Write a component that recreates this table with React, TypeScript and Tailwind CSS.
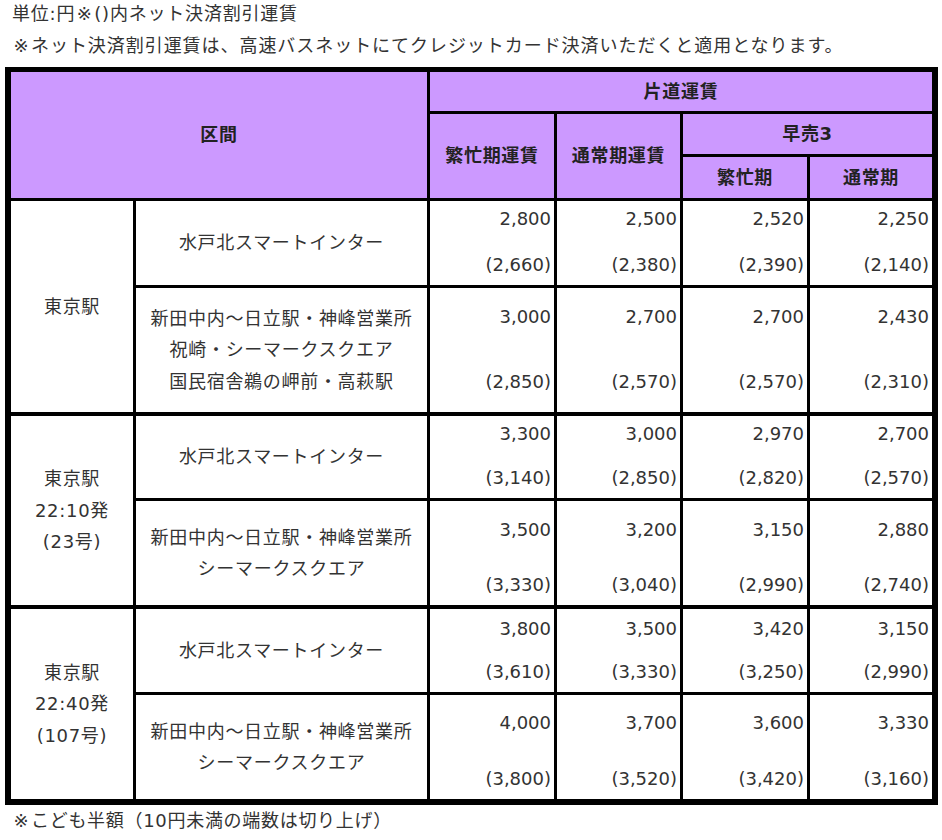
import React from 'react';

type FareRow = {
    route: string[];
    fares: [string, string][];
    pad: string;
};

type FareGroup = {
    label: string[];
    rows: FareRow[];
};

const GROUPS: FareGroup[] = [
    {
        label: ['東京駅'],
        rows: [
            {
                route: ['水戸北スマートインター'],
                fares: [['2,800', '(2,660)'], ['2,500', '(2,380)'], ['2,520', '(2,390)'], ['2,250', '(2,140)']],
                pad: 'pt-[2px] pb-[5px]',
            },
            {
                route: ['新田中内～日立駅・神峰営業所', '祝崎・シーマークスクエア', '国民宿舎鵜の岬前・高萩駅'],
                fares: [['3,000', '(2,850)'], ['2,700', '(2,570)'], ['2,700', '(2,570)'], ['2,430', '(2,310)']],
                pad: 'pt-[13px] pb-[15px]',
            },
        ],
    },
    {
        label: ['東京駅', '22:10発', '(23号)'],
        rows: [
            {
                route: ['水戸北スマートインター'],
                fares: [['3,300', '(3,140)'], ['3,000', '(2,850)'], ['2,970', '(2,820)'], ['2,700', '(2,570)']],
                pad: 'pt-[2px] pb-[5px]',
            },
            {
                route: ['新田中内～日立駅・神峰営業所', 'シーマークスクエア'],
                fares: [['3,500', '(3,330)'], ['3,200', '(3,040)'], ['3,150', '(2,990)'], ['2,880', '(2,740)']],
                pad: 'pt-[13px] pb-[5px]',
            },
        ],
    },
    {
        label: ['東京駅', '22:40発', '(107号)'],
        rows: [
            {
                route: ['水戸北スマートインター'],
                fares: [['3,800', '(3,610)'], ['3,500', '(3,330)'], ['3,420', '(3,250)'], ['3,150', '(2,990)']],
                pad: 'pt-[4px] pb-[5px]',
            },
            {
                route: ['新田中内～日立駅・神峰営業所', 'シーマークスクエア'],
                fares: [['4,000', '(3,800)'], ['3,700', '(3,520)'], ['3,600', '(3,420)'], ['3,330', '(3,160)']],
                pad: 'pt-[12px] pb-[5px]',
            },
        ],
    },
];

const HEAD = 'bg-[#cc99ff] flex items-center justify-center font-bold tracking-[0.7px] text-[#222]';

// ※ は全角幅で
function Mark() {
    return <span className="inline-block w-[19px] text-center">※</span>;
}

export default function App() {
    return (
        <div className="bg-white px-[5px] text-[18px] leading-[31.5px] text-[#333] font-['DejaVu_Sans','Noto_Sans_CJK_JP',sans-serif]">
            {/* 注記 */}
            <div className="-mt-[2px] mb-[6px] ml-[7px]">
                <p className="tracking-[0.8px]">単位:円<Mark />()内ネット決済割引運賃</p>
                <p className="tracking-[0.95px]"><Mark />ネット決済割引運賃は、高速バスネットにてクレジットカード決済いただくと適用となります。</p>
            </div>

            {/* 運賃表 */}
            <div className="w-[933px] bg-black pt-[5px] pl-[6px] pr-[6px] pb-[6px]">
                <div className="grid grid-cols-[122px_291px_124px_123px_124px_122px] grid-rows-[39px_40px_41px_84px_124px_83px_104px_84px_104px] gap-[3px]">
                    <div className={`${HEAD} col-span-2 row-span-3`}>区間</div>
                    <div className={`${HEAD} col-span-4`}>片道運賃</div>
                    <div className={`${HEAD} row-span-2`}>繁忙期運賃</div>
                    <div className={`${HEAD} row-span-2`}>通常期運賃</div>
                    <div className={`${HEAD} col-span-2`}>早売3</div>
                    <div className={HEAD}>繁忙期</div>
                    <div className={HEAD}>通常期</div>

                    {GROUPS.map((group, gi) => {
                        const top = gi > 0 ? 'border-t border-black' : '';
                        return group.rows.map((row, ri) => {
                            const edge = ri === 0 ? top : '';
                            return (
                                <React.Fragment key={`${gi}-${ri}`}>
                                    {ri === 0 && (
                                        <div className={`bg-white row-span-2 flex flex-col items-center justify-center tracking-[0.7px] ${top}`}>
                                            {group.label.map(l => <span key={l}>{l}</span>)}
                                        </div>
                                    )}
                                    <div className={`bg-white flex flex-col items-center justify-center tracking-[0.7px] ${edge}`}>
                                        {row.route.map(r => <span key={r}>{r}</span>)}
                                    </div>
                                    {row.fares.map(([fare, net], fi) => (
                                        <div key={fi} className={`bg-white flex flex-col items-end justify-between pr-[3px] ${row.pad} ${edge}`}>
                                            <span>{fare}</span>
                                            <span>{net}</span>
                                        </div>
                                    ))}
                                </React.Fragment>
                            );
                        });
                    })}
                </div>
            </div>

            <p className="ml-[7px] tracking-[0.7px]"><Mark />こども半額（10円未満の端数は切り上げ）</p>
        </div>
    );
}
